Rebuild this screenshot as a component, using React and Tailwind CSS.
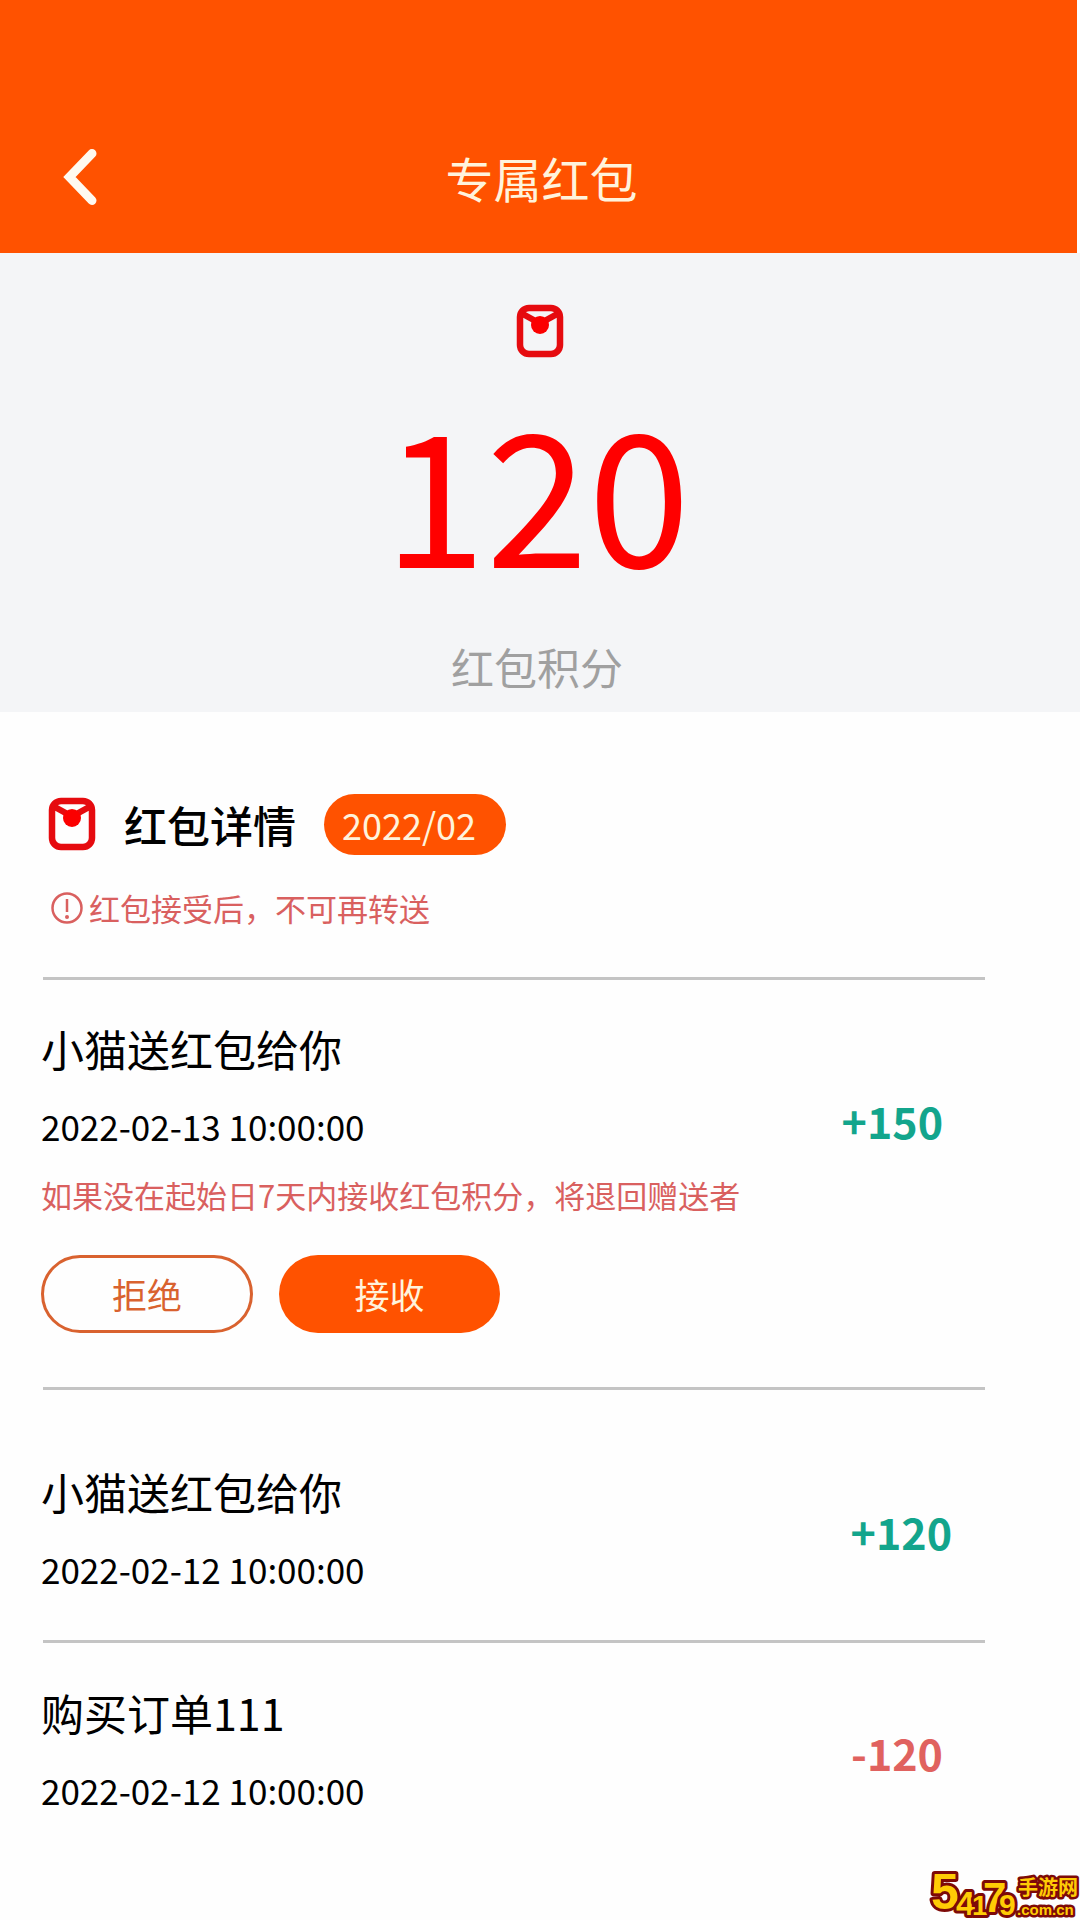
import { useState } from 'react';

const records = [
  {
    id: 1,
    title: '小猫送红包给你',
    time: '2022-02-13 10:00:00',
    amount: 150,
    notice: '如果没在起始日7天内接收红包积分，将退回赠送者',
    pending: true,
  },
  { id: 2, title: '小猫送红包给你', time: '2022-02-12 10:00:00', amount: 120 },
  { id: 3, title: '购买订单111', time: '2022-02-12 10:00:00', amount: -120 },
];

// row padding and amount position for each record
const rowStyles = ['pt-[36px] pb-[54px]', 'pt-[69px] pb-[45px]', 'pt-[37px] pb-[45px]'];
const amountStyles = ['pt-[72px] pr-[42px]', 'pt-[40px] pr-[33px]', 'pt-[40px] pr-[42px]'];

function EnvelopeIcon() {
  return (
    <svg className="h-[54px] w-[48px] shrink-0" viewBox="0 0 48 54" fill="none" aria-hidden="true">
      <rect x="4" y="4" width="40" height="46" rx="9" stroke="#e60b0f" strokeWidth="6.5" />
      <path d="M5 9L24 19.5L43 9" stroke="#e60b0f" strokeWidth="6" />
      <path d="M5 6V14L10 9M43 6V14L38 9" stroke="#e60b0f" strokeWidth="3" />
      <circle cx="24" cy="21" r="9" fill="#fb0000" />
    </svg>
  );
}

function Header() {
  return (
    <header className="mr-[3px] grid grid-cols-[1fr_auto_1fr] items-center bg-[#ff5200] pt-[141px] pr-[57px] pb-[40px] pl-[63px]">
      <button type="button" aria-label="返回" className="justify-self-start">
        <svg className="h-[58px] w-[34px]" viewBox="0 0 34 58" fill="none">
          <path d="M29 5.5L6.5 29L29 52.5" stroke="#fffaf0" strokeWidth="9" strokeLinecap="round" />
        </svg>
      </button>
      <h1 className="text-[48px] leading-[72px] text-[#fff3dc]">专属红包</h1>
    </header>
  );
}

function RecordItem({ record, index }) {
  const [status, setStatus] = useState(record.pending ? 'pending' : 'done');

  return (
    <li>
      <hr className="ml-[2px] border-t-3 border-[#c4c4c4]" />
      <div className={`flex items-start justify-between ${rowStyles[index]}`}>
        <div>
          <h3 className="text-[43px] leading-[64px]">{record.title}</h3>
          <p className="mt-[20px] text-[35px] leading-[52px]">{record.time}</p>
          {record.notice && (
            <p className="mt-[20px] text-[31px] leading-[46px] text-[#d9605f]">{record.notice}</p>
          )}
          {status === 'pending' && (
            <div className="mt-[37px] flex gap-[26px]">
              <button
                type="button"
                onClick={() => setStatus('rejected')}
                className="h-[78px] w-[212px] rounded-full border-3 border-[#d9622f] text-[35px] leading-[52px] text-[#d9622f]"
              >
                拒绝
              </button>
              <button
                type="button"
                onClick={() => setStatus('accepted')}
                className="h-[78px] w-[221px] rounded-full bg-[#ff5200] text-[35px] leading-[52px] text-[#fff3dc]"
              >
                接收
              </button>
            </div>
          )}
        </div>
        <div
          className={`text-[43px] leading-[64px] font-bold ${amountStyles[index]} ${
            record.amount > 0 ? 'text-[#13a58c]' : 'text-[#e0625f]'
          }`}
        >
          {record.amount > 0 ? `+${record.amount}` : record.amount}
        </div>
      </div>
    </li>
  );
}

function Watermark() {
  return (
    <svg
      className="absolute right-0 bottom-0 h-[56px] w-[152px]"
      viewBox="0 0 152 56"
      fill="#ffcc05"
      stroke="#7d0a08"
      strokeWidth="6"
      strokeLinejoin="round"
      paintOrder="stroke"
      fontFamily="'Liberation Sans', 'Noto Sans CJK SC', sans-serif"
      fontWeight="700"
    >
      <text x="3" y="45" fontSize="50">5</text>
      <text x="28" y="51" fontSize="34">4</text>
      <text x="44" y="51" fontSize="28">1</text>
      <text x="55" y="48" fontSize="42">7</text>
      <text x="71" y="51" fontSize="30">9</text>
      <text x="90" y="31" fontSize="20" strokeWidth="5">手游网</text>
      <text x="89" y="51" fontSize="15" strokeWidth="5">.com.cn</text>
    </svg>
  );
}

export default function App() {
  return (
    <div className="relative min-h-screen bg-[#fefefe] font-['Noto_Sans_CJK_SC',sans-serif] text-black">
      <Header />

      <section className="flex flex-col items-center bg-[#f4f5f7] pt-[51px] pb-[14px]">
        <EnvelopeIcon />
        <div className="mt-[20px] pr-[6px] text-[184px] leading-[220px] text-[#ff0000]">120</div>
        <p className="mt-[36px] pr-[6px] text-[43px] leading-[64px] text-[#a0a0a0]">红包积分</p>
      </section>

      <main className="pr-[95px] pl-[41px]">
        <div className="flex items-center pt-[80px]">
          <div className="pl-[7px]">
            <EnvelopeIcon />
          </div>
          <h2 className="ml-[28px] text-[43px] leading-[64px] font-medium">红包详情</h2>
          <span className="ml-[28px] rounded-full bg-[#ff5200] pr-[30px] pl-[18px] text-[36px] leading-[61px] text-[#fff3dc]">
            2022/02
          </span>
        </div>
        <div className="mt-[29px] mb-[46px] flex items-center gap-[6px] pl-[10px] text-[31px] leading-[46px] text-[#d9605f]">
          <svg className="size-[32px]" viewBox="0 0 32 32" fill="none" stroke="currentColor" aria-hidden="true">
            <circle cx="16" cy="16" r="14.5" strokeWidth="2.5" />
            <path d="M16 7V20" strokeWidth="2.5" />
            <circle cx="16" cy="25" r="2" fill="currentColor" stroke="none" />
          </svg>
          <p>红包接受后，不可再转送</p>
        </div>
        <ul>
          {records.map((record, index) => (
            <RecordItem key={record.id} record={record} index={index} />
          ))}
        </ul>
      </main>

      <Watermark />
    </div>
  );
}
